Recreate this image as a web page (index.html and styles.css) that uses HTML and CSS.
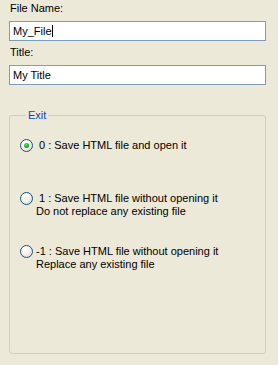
FILE: index.html
```html
<!DOCTYPE html>
<html lang="en">
<head>
  <meta charset="UTF-8" />
  <title>Save HTML</title>
  <link rel="stylesheet" href="styles.css">
</head>
<body>
  <div class="field">
    <label class="field-label" for="fileName">File Name:</label>
    <div class="input-wrap">
      <input class="text-input" id="fileName" type="text" value="My_File">
      <span class="caret"></span>
    </div>
  </div>
  <div class="field">
    <label class="field-label" for="title">Title:</label>
    <input class="text-input" id="title" type="text" value="My Title">
  </div>

  <fieldset class="group">
    <legend class="group-title">Exit</legend>
    <div class="options">
      <div class="option">
        <span class="radio checked"></span>
        <div class="option-text indent">0 : Save HTML file and open it</div>
      </div>
      <div class="option">
        <span class="radio"></span>
        <div class="option-text"><div class="indent">1 : Save HTML file without opening it</div>Do not replace any existing file</div>
      </div>
      <div class="option">
        <span class="radio"></span>
        <div class="option-text">-1 : Save HTML file without opening it<br>Replace any existing file</div>
      </div>
    </div>
  </fieldset>
</body>
</html>
```

FILE: styles.css
```css
* {
  box-sizing: border-box;
}
body {
  margin: 0;
  padding: 2px 12px 0 9px;
  background: #ece9d8;
  color: #000;
  font-family: "Liberation Sans", Arial, sans-serif;
  font-size: 11px;
  line-height: 13px;
}
.field {
  display: flex;
  flex-direction: column;
  gap: 6px;
  margin-bottom: 5px;
}
.field-label {
  display: block;
  padding-left: 1px;
}
.input-wrap {
  position: relative;
}
.text-input {
  display: block;
  width: 100%;
  height: 20px;
  margin: 0;
  padding: 0 3px;
  border: 1px solid #7f9db9;
  background: #fff;
  font-family: inherit;
  font-size: 11px;
  color: #000;
  outline: none;
}
.caret {
  position: absolute;
  left: 43px;
  top: 4px;
  width: 1px;
  height: 12px;
  background: #000;
}
.group {
  margin: 23px 0 0 0;
  padding: 0 0 0 10px;
  height: 246px;
  border: 1px solid #d0d0bf;
  border-radius: 3px;
}
.group-title {
  margin-left: 6px;
  padding: 0 2px;
  line-height: 14px;
  color: #0046d5;
}
.options {
  display: grid;
  grid-auto-rows: 53px;
  margin-top: 17px;
}
.option {
  display: flex;
  align-items: flex-start;
  gap: 3px;
}
.option-text {
  white-space: nowrap;
}
.indent {
  text-indent: 3px;
}
.radio {
  flex: none;
  width: 13px;
  height: 13px;
  border: 1px solid #1c5180;
  border-radius: 50%;
  background: radial-gradient(circle at 35% 30%, #ffffff 0%, #f3f2ec 45%, #d8d5c8 100%);
  position: relative;
}
.radio.checked::after {
  content: "";
  position: absolute;
  left: 3px;
  top: 3px;
  width: 5px;
  height: 5px;
  border-radius: 50%;
  background: radial-gradient(circle at 40% 35%, #6ee26e 0%, #21a121 60%, #1a8c1a 100%);
}
```
